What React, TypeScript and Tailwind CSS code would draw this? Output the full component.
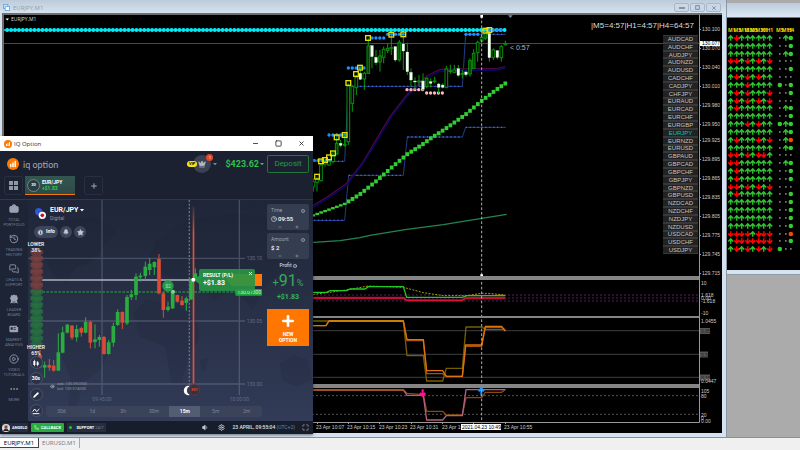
import {
  Bell,
  BriefcaseBusiness,
  CirclePlay,
  Clock3,
  Crown,
  Ellipsis,
  Eye,
  History,
  Info,
  Maximize,
  MessagesSquare,
  Minus,
  Pencil,
  Phone,
  Plus,
  Settings,
  Square,
  Star,
  Volume1,
  X,
} from 'lucide-react';

type Point = [number, number];

// pair, eight trend arrows, three status marks
const SIGNALS: [string, string, string][] = [
  ['AUDCAD', 'UDUUUUUU', '-UG'],
  ['AUDCHF', 'UUUUUUUU', '--G'],
  ['AUDJPY', 'UUUUUUUU', '-UG'],
  ['AUDNZD', 'DDUDUDUD', '---'],
  ['AUDUSD', 'UUUUUUUU', '--G'],
  ['CADCHF', 'UDUDUDUU', '---'],
  ['CADJPY', 'UUUDUUUU', 'G-G'],
  ['CHFJPY', 'UDUDUUUD', '--G'],
  ['EURAUD', 'UDUDUDUD', '---'],
  ['EURCAD', 'UDUUUUUU', '-UG'],
  ['EURCHF', 'UUUUUUUU', '--G'],
  ['EURGBP', 'UUUDUDUU', 'GUG'],
  ['EURJPY', 'UUUUUUUU', '-UG'],
  ['EURNZD', 'UDUUUDUD', '-UR'],
  ['EURUSD', 'UUUUUUUU', '-UG'],
  ['GBPAUD', 'DDUDUDDU', '---'],
  ['GBPCAD', 'DDUUUUUU', '-UG'],
  ['GBPCHF', 'UDUUUUUU', '--G'],
  ['GBPJPY', 'UDUUUUUU', '--G'],
  ['GBPNZD', 'DDUDUDUD', '---'],
  ['GBPUSD', 'UDUUUUUU', '--G'],
  ['NZDCAD', 'UUUUUUUU', '--G'],
  ['NZDCHF', 'UUUUUUUU', '--G'],
  ['NZDJPY', 'UUUUUUUU', '--G'],
  ['NZDUSD', 'UUUUUUUU', '--G'],
  ['USDCAD', 'DDDDUDDD', '--R'],
  ['USDCHF', 'UDDDDDDD', '--G'],
  ['USDJPY', 'UDUDUDUD', 'G--'],
];

// x, high, low, body top, body bottom, kind (h hollow, w white, d dark green)
const M1_CANDLES: [number, number, number, number, number, string][] = [
  [10, 535, 575, 545, 560, 'h'], [21, 530, 575, 538, 547, 'h'], [33, 490, 545, 495, 542, 'h'],
  [45, 480, 500, 486, 492, 'h'], [57, 480, 497, 485, 495, 'h'], [69, 455, 490, 465, 485, 'h'],
  [80, 412, 465, 430, 462, 'd'], [92, 420, 442, 430, 436, 'w'], [104, 405, 440, 433, 436, 'h'],
  [115, 250, 435, 258, 425, 'h'], [127, 255, 335, 260, 310, 'h'], [139, 225, 285, 232, 262, 'h'],
  [151, 200, 240, 220, 238, 'w'], [163, 215, 270, 220, 237, 'h'], [175, 115, 222, 138, 220, 'd'],
  [186, 135, 205, 137, 170, 'w'], [198, 150, 195, 172, 188, 'w'], [210, 150, 215, 168, 186, 'd'],
  [221, 140, 190, 148, 172, 'h'], [233, 130, 160, 145, 152, 'd'], [244, 105, 165, 143, 145, 'h'],
  [256, 140, 185, 140, 180, 'w'], [268, 120, 185, 127, 180, 'd'], [280, 105, 210, 132, 153, 'w'],
  [292, 128, 225, 156, 215, 'w'], [303, 205, 258, 217, 240, 'w'], [315, 232, 270, 243, 246, 'w'],
  [327, 225, 260, 243, 246, 'h'], [339, 220, 272, 243, 267, 'w'], [350, 232, 265, 235, 260, 'd'],
  [362, 235, 262, 245, 250, 'w'], [374, 230, 250, 243, 245, 'h'], [386, 248, 280, 252, 262, 'w'],
  [398, 250, 265, 255, 262, 'w'], [409, 198, 265, 207, 262, 'h'], [421, 194, 222, 212, 215, 'h'],
  [433, 195, 220, 210, 217, 'h'], [445, 195, 230, 206, 226, 'w'], [457, 210, 235, 220, 223, 'h'],
  [468, 212, 230, 216, 224, 'w'], [480, 175, 230, 182, 222, 'd'], [491, 148, 207, 160, 205, 'd'],
  [503, 122, 185, 127, 158, 'h'], [515, 95, 135, 112, 123, 'h'], [526, 95, 120, 100, 115, 'd'],
  [538, 95, 185, 100, 173, 'w'], [550, 145, 180, 150, 172, 'h'], [562, 150, 178, 152, 172, 'w'],
  [574, 135, 185, 140, 173, 'h'], [586, 122, 137, 130, 134, 'h'],
];

const YELLOW_BOXES: Point[] = [
  [21, 530], [33, 484], [45, 480], [57, 472], [69, 460], [80, 412], [104, 405], [115, 249],
  [138, 222], [150, 203], [174, 114], [244, 104], [280, 103], [526, 92], [538, 90],
];

// y, first x, last x
const BLUE_DOTS: [number, number, number][] = [
  [481, 1, 60], [405, 57, 104], [204, 115, 163], [114, 186, 222], [103, 233, 280], [103, 468, 505], [90, 538, 576],
];

const PRICES: [string, number][] = [
  ['130.100', 29], ['130.070', 48], ['130.040', 67], ['130.010', 86], ['129.980', 105],
  ['129.950', 124], ['129.925', 140], ['129.895', 159], ['129.865', 178], ['129.835', 197],
  ['129.805', 216], ['129.775', 235], ['129.745', 254], ['129.715', 273],
];

const INDICATOR_LABELS: [string, number][] = [
  ['10', 283], ['1.618', 295], ['0.00', 298], ['-1.618', 301], ['-10', 313], ['1.0455', 321],
  ['0.0447', 381], ['105', 391], ['80', 396], ['20', 415], ['0', 418], ['0.00', 421],
];

const TIMES: [string, number][] = [
  ['23 Apr 10:07', 316], ['23 Apr 10:15', 347], ['23 Apr 10:23', 379], ['23 Apr 10:31', 410],
  ['23 Apr 10:39', 442], ['23 Apr 10:55', 504],
];

const BAR = 11.75;

const TREND: Point[] = [
  [0, 650], [60, 628], [104, 612], [150, 583], [200, 543], [245, 503], [292, 463], [340, 432],
  [360, 417], [409, 385], [468, 343], [515, 303], [561, 268], [587, 250],
];

function steps(from: number, to: number, size = BAR) {
  return Array.from({ length: Math.floor((to - from) / size + 0.3) + 1 }, (_, i) => from + i * size);
}

function valueAt(points: Point[], x: number) {
  const next = Math.max(1, points.findIndex(([px]) => px >= x));
  const [x0, y0] = points[next - 1];
  const [x1, y1] = points[next];
  return y0 + ((x - x0) / (x1 - x0)) * (y1 - y0);
}

function TerminalChart() {
  return (
    <svg viewBox="4 15 718 418" className="block h-full w-full" fontFamily="'Open Sans', sans-serif" role="img" aria-label="EURJPY one minute chart">
      <rect x="4" y="15" width="718" height="418" fill="#000" />
      <path d="M4 43.5H699" stroke="#414b56" />
      <g transform="translate(310 0) scale(.33333)" fill="none">
        <path d="M0 661H104L116 526H280L292 411H457L467 382H586M0 484H104L115 259H457L467 103H586" stroke="#233e88" strokeWidth="3" />
        <path d="M0 661H104M116 526H280M292 411H457M467 382H586M60 484H104M115 259H457M467 103H586" stroke="#4169e1" strokeWidth="4" strokeDasharray="4 7.75" />
        <path d="M0 622L50 592L110 550L160 485L195 425L240 350L290 285L350 228L390 208L470 206L560 206L586 200" stroke="#4c083c" strokeWidth="4" />
        <path d="M0 628L50 598L110 556L160 489L200 425L245 350L292 288L350 236L390 213L470 212L560 210L586 205" stroke="#08086c" strokeWidth="4" />
        <path d="M0 728L90 722L150 713L180 706L290 688L400 674L515 655L590 643" stroke="#23854f" strokeWidth="4" />
        {steps(-908.5, 586).map((x) => (
          <circle key={x} cx={x} cy="90" r="5.8" fill="#00f6ff" />
        ))}
        <path d="M-918 90H586" stroke="#00e5f0" strokeWidth="4" />
        {BLUE_DOTS.map(([y, from, to]) => steps(from, to).map((x) => <circle key={`${x}-${y}`} cx={x} cy={y} r="5" fill="#1e90ff" />))}
        {[[269, 291, 340], [279, 350, 398]].map(([y, from, to]) =>
          steps(from, to).map((x) => <circle key={x} cx={x} cy={y} r="5" fill="#ffb6c1" />),
        )}
        {M1_CANDLES.map(([x, high, low, top, bottom, kind]) => (
          <g key={x}>
            <path d={`M${x} ${high}V${low}`} stroke="#0a9a0a" strokeWidth="3" />
            <rect
              x={x - 4}
              y={top}
              width="8"
              height={bottom - top}
              fill={kind === 'w' ? '#f4fff4' : kind === 'd' ? '#043c04' : '#000'}
              stroke={kind === 'w' ? '#c8f0c8' : '#0a8f0a'}
              strokeWidth={kind === 'w' ? 1 : 3}
            />
          </g>
        ))}
        {YELLOW_BOXES.map(([x, y]) => (
          <rect key={`${x}-${y}`} x={x - 7} y={y - 7} width="14" height="14" stroke="#e6e000" strokeWidth="4" />
        ))}
        {steps(10.5, 586).map((x) => (
          <rect key={x} x={x - 6} y={valueAt(TREND, x) - (x > 115 ? 6 : 3.5)} width="11" height={x > 115 ? 12 : 7} fill="#32cd32" />
        ))}

        <g stroke="#54205f" strokeWidth="3" strokeDasharray="6 6">
          <path d="M-918 885H1167M-918 894H1167M-918 903H1167" />
        </g>
        <path d="M0 894H280L290 901H457L467 894H586" stroke="#8e1235" strokeWidth="7" />
        <path d="M0 894H280L290 901H457L467 894H586" stroke="#f0103a" strokeWidth="3" />
        <path d="M0 884L60 877L120 868L175 858L280 862L340 878L400 887H470L515 880H535L586 885" stroke="#a8a000" strokeWidth="3" strokeDasharray="6 4" />
        <path d="M0 877H50L60 872H110L120 867H165L175 860H280L290 892H457L470 887H586" stroke="#22c922" strokeWidth="4" />

        <path d="M-918 992H1167M-918 1063H1167M-918 1132H1167" stroke="#333" strokeWidth="4" />
        <path d="M0 963H280L291 1067H340L350 1143H398L409 1105H457L468 981H515L526 988H586" stroke="#746000" strokeWidth="4" />
        <path d="M0 977H48L57 963H280L291 1022H340L350 1121H398L409 1129H457L467 1039H515L526 982H575L586 993" stroke="#a9500a" strokeWidth="4" />
        <path d="M0 977H48L57 963H280L291 1019H340L350 1112H398L409 1129H457L467 1035H515L526 979H575L586 993" stroke="#e0720f" strokeWidth="4" />
        <path d="M57 963H280" stroke="#c89400" strokeWidth="3" />

        <path d="M-918 1187H1167M-918 1243H1167" stroke="#555" strokeWidth="3" strokeDasharray="6 6" />
        <path d="M0 1170H280L291 1180L340 1184L350 1234H398L409 1245H457L468 1193H515L526 1177H575L586 1168" stroke="#8a4a0c" strokeWidth="4" />
        <path d="M280 1170L291 1186H340L350 1260H398L409 1247H457L468 1169H586" stroke="#b06082" strokeWidth="4" />
        <path d="M0 1170H280" stroke="#b05a2a" strokeWidth="4" />
        <path d="M338 1168V1186M330 1179L338 1188L346 1179" stroke="#ff1493" strokeWidth="6" />
        <path d="M514 1184V1166M506 1174L514 1164L522 1174" stroke="#1e90ff" strokeWidth="6" />
        <path d="M515 48V1270" stroke="#b0b0b0" strokeWidth="3" strokeDasharray="8 6" />
        <path d="M511 44H519V53H511ZM511 823H519V832H511Z" fill="#fff" />
        <path d="M594 46H608L601 54Z" fill="#6f8fb0" />
      </g>

      <g fill="#858585">
        <rect x="4" y="276" width="695" height="4" />
        <rect x="4" y="316" width="695" height="2" />
        <rect x="4" y="384" width="695" height="4" />
      </g>
      <path d="M699.5 15V422.5H4M317.5 422V424M348.5 422V424M379.5 422V424M411.5 422V424M442.5 422V424M473.5 422V424M505.5 422V424" stroke="#999" fill="none" />

      <path d="M5.5 18.5H9L7.3 20.5Z" fill="#fff" />
      <text x="11" y="21" fontSize="5" fill="#ddd">EURJPY,M1</text>
      <text x="694" y="28" fontSize="8" fill="#ddd" textAnchor="end" fontFamily="'Liberation Sans', sans-serif">|M5=4:57|H1=4:57|H4=64:57</text>
      <text x="510" y="50" fontSize="7" fill="#bbb" fontFamily="'Liberation Sans', sans-serif">&lt; 0:57</text>
      <g fontSize="5" fill="#ccc" fontFamily="'Liberation Sans', sans-serif">
        {PRICES.map(([label, y]) => (
          <g key={label}>
            <path d={`M699 ${y + 0.5}H701`} stroke="#999" />
            <text x="702" y={y + 2}>{label}</text>
          </g>
        ))}
        {[['0.85', 331], ['0.5', 354.5], ['0.15', 377.5]].map(([label, y]) => (
          <g key={label}>
            <rect x="700" y={Number(y) - 3} width={label === '0.5' ? 8 : 10} height="6" fill="#555" />
            <text x="701" y={Number(y) + 2} fill="#222">{label}</text>
          </g>
        ))}
        {INDICATOR_LABELS.map(([label, y]) => (
          <text key={y} x="701" y={y + 2}>{label}</text>
        ))}
        {TIMES.map(([label, x]) => (
          <text key={label} x={x} y="429">{label}</text>
        ))}
        <rect x="700" y="41" width="20" height="5" fill="#fff" />
        <text x="702" y="45" fill="#000">130.077</text>
        <rect x="461" y="424" width="40" height="6" fill="#fff" />
        <text x="462" y="429" fill="#000">2021.04.23 10:49</text>
      </g>
    </svg>
  );
}

function WindowButton({ label, children }: { label: string; children: React.ReactNode }) {
  return (
    <button aria-label={label} className="flex h-[9px] w-[15px] items-center justify-center rounded-[2px] border border-[#a9b8c8] bg-[#c9d7e6] text-[#8893a0]">
      {children}
    </button>
  );
}

function TerminalWindow() {
  return (
    <section className="flex min-w-0 flex-1 flex-col bg-[#d3e1f0] pr-1 pb-1 pl-0.5">
      <header className="-mr-1 -ml-0.5 flex h-[13px] items-center gap-px bg-linear-to-b from-[#bccbda] to-[#d6e3f0] pt-0.5 pr-[5px] pl-[3px]">
        <svg viewBox="0 0 16 16" className="mr-0.5 size-[7px]">
          <rect x="1" y="1" width="10" height="9" fill="#d6e8fa" stroke="#6aa5e0" strokeWidth="2" />
          <rect x="5" y="6" width="10" height="9" fill="#fff" stroke="#6aa5e0" strokeWidth="2" />
        </svg>
        <span className="flex-1 text-[6px] leading-none text-[#929ca7]">EURJPY,M1</span>
        <WindowButton label="Minimize"><span className="h-0.5 w-1.5 border border-[#8893a0]" /></WindowButton>
        <WindowButton label="Restore"><Square className="size-[5px]" strokeWidth={5} /></WindowButton>
        <WindowButton label="Close"><X className="size-1.5" strokeWidth={4} /></WindowButton>
      </header>
      <div className="relative min-h-0 flex-1 border-t-2 border-l-2 border-[#6e6e6e] bg-black">
        <TerminalChart />
        <div className="absolute top-5 right-6 grid h-[219px] w-[35px] auto-rows-fr">
          {SIGNALS.map(([pair]) => (
            <button
              key={pair}
              className={`flex items-center justify-center border-y border-[#383838] bg-[#222] font-['Liberation_Sans',sans-serif] text-[6px] leading-none ${pair === 'EURJPY' ? 'text-[#00c8c8]' : 'text-[#c4c4c4]'}`}
            >
              {pair}
            </button>
          ))}
        </div>
      </div>
    </section>
  );
}

function Mark({ kind }: { kind: string }) {
  return (
    <svg viewBox="0 0 6 8" className="h-full w-full overflow-visible">
      {kind === 'U' && <path d="M3 7V2M.3 4.6L3 1.7L5.7 4.6" fill="none" stroke="#2fc72f" strokeWidth="1.5" />}
      {kind === 'D' && <path d="M3 1V6M.3 3.4L3 6.3L5.7 3.4" fill="none" stroke="#f00" strokeWidth="1.7" />}
      {kind === 'G' && <circle cx="3" cy="4" r="2.4" fill="#32cd32" />}
      {kind === 'R' && <circle cx="3" cy="4" r="2.4" fill="#ff4500" />}
      {kind === '-' && <rect x="2.1" y="3.2" width="1.8" height="1.6" fill="#888" />}
    </svg>
  );
}

function SignalsWindow() {
  return (
    <section className="w-[74px] overflow-hidden border-l border-[#8a96a3] bg-[#ababab]">
      <div className="mt-[3px] h-[15px] border-b border-[#777] bg-linear-to-b from-[#bccbda] to-[#dce8f4]" />
      <div className="h-[252px] bg-black pt-[9px]">
        <div className="flex gap-1 pl-px text-[5px] leading-[7px] font-bold text-[#e0d800]">
          <div className="grid w-[44px] grid-cols-8">
            {['M1', 'M5', 'M15', 'M30', 'M5', 'M30', 'H1', 'H1'].map((label, i) => (
              <span key={i} className="w-0 whitespace-nowrap">{label}</span>
            ))}
          </div>
          <div className="grid w-[17px] grid-cols-3">
            {['M5', 'M15', 'H4'].map((label) => (
              <span key={label} className="w-0 whitespace-nowrap">{label}</span>
            ))}
          </div>
        </div>
        <div className="grid h-[219px] auto-rows-fr pl-px">
          {SIGNALS.map(([pair, trend, status]) => (
            <div key={pair} className="flex min-h-0 gap-[5px]">
              <div className="grid w-[44px] grid-cols-8">
                {trend.split('').map((kind, i) => <Mark key={i} kind={kind} />)}
              </div>
              <div className="grid w-[17px] grid-cols-3">
                {status.split('').map((kind, i) => <Mark key={i} kind={kind} />)}
              </div>
            </div>
          ))}
        </div>
      </div>
      <div className="h-[5px] border-b border-[#8f9aa6] bg-[#d6e3f1]" />
    </section>
  );
}

// x, high, low, body top, body bottom, rising
const OPTION_CANDLES: [number, number, number, number, number, boolean][] = [
  [120, 1050, 1104, 1065, 1102, false], [134, 1085, 1133, 1095, 1103, true], [148, 1077, 1112, 1095, 1103, false],
  [161, 1080, 1115, 1097, 1112, false], [175, 1000, 1112, 1057, 1112, true], [188, 980, 1060, 997, 1058, true],
  [202, 972, 1000, 974, 998, true], [216, 975, 1020, 977, 1013, false], [230, 975, 1025, 987, 1012, true],
  [244, 980, 1010, 984, 998, false], [257, 952, 1000, 966, 998, true], [271, 962, 1045, 966, 1028, false],
  [285, 973, 1045, 1018, 1026, true], [298, 1005, 1040, 1011, 1020, true], [312, 1008, 1064, 1011, 1062, false],
  [326, 1020, 1064, 1027, 1062, true], [340, 968, 1040, 978, 1028, true], [353, 928, 978, 936, 975, true],
  [367, 934, 987, 936, 968, false], [381, 885, 975, 891, 970, true], [394, 870, 900, 883, 892, true],
  [408, 820, 900, 830, 885, true], [421, 818, 845, 827, 832, true], [436, 785, 840, 800, 828, true],
  [449, 774, 825, 791, 810, true], [463, 784, 825, 786, 802, true], [477, 762, 883, 777, 880, false],
  [490, 876, 953, 880, 930, false], [504, 905, 935, 920, 930, true], [518, 870, 927, 875, 925, true],
  [532, 884, 908, 885, 905, false], [546, 888, 917, 902, 915, false], [559, 890, 932, 895, 909, true],
  [573, 835, 900, 838, 898, true], [586, 805, 840, 820, 838, true],
];

function OptionChart() {
  return (
    <svg viewBox="84 600 855 663" className="absolute inset-0 h-full w-full" fontFamily="Roboto, sans-serif" role="img" aria-label="EUR/JPY candlestick chart">
      <defs>
        <pattern id="land" width="6" height="6" patternUnits="userSpaceOnUse">
          <circle cx="3" cy="3" r="2.4" fill="#161c2c" />
        </pattern>
        <linearGradient id="deadline" x1="0" y1="0" x2="0" y2="1">
          <stop offset="0" stopColor="#e2523a" stopOpacity=".2" />
          <stop offset=".15" stopColor="#e2523a" />
        </linearGradient>
      </defs>
      <g fill="url(#land)" opacity=".35">
        <path d="M120 700L190 660L290 650L350 690L310 740L270 790L230 800L200 850L160 830L130 770Z" />
        <path d="M180 990L240 965L300 1000L330 1050L300 1110L250 1150L225 1240L205 1230L210 1130L180 1060Z" />
        <path d="M400 940L440 900L530 910L590 960L600 1010L570 1060L545 1150L515 1150L495 1040L420 1010Z" />
        <path d="M600 1080L625 1072L618 1110L604 1115Z" />
        <path d="M440 790L470 720L560 660L700 640L860 660L920 720L870 800L800 850L760 930L700 870L640 900L590 840L500 830Z" />
        <path d="M840 1090L880 1065L925 1080L935 1140L890 1160L845 1140Z" />
      </g>
      <g stroke="#8b94aa" strokeOpacity=".35" strokeWidth="4">
        <path d="M306 600V1185M718 600V1185M84 775H735M84 963H735M84 1152H735" />
      </g>
      <path d="M126 840H575" stroke="#aeb3c0" strokeWidth="4" />
      <path d="M115 876H710" stroke="#27a844" strokeWidth="3" strokeDasharray="8 4" />
      <path d="M568 600V1160" stroke="#6a7286" strokeWidth="4" strokeDasharray="6 5" />
      <path d="M578 620H583V1150H578Z" fill="url(#deadline)" />
      {/* sentiment scale */}
      {steps(750, 1015, 20).map((y) => (
        <path key={y} d={`M92 ${y}H128L130 ${y + 8}L122 ${y + 16}L130 ${y + 20}L110 ${y + 36}L90 ${y + 20}L98 ${y + 16}L90 ${y + 8}Z`} fill={y < 862 ? '#7c403f' : '#27733f'} opacity=".75" />
      ))}
      {OPTION_CANDLES.map(([x, high, low, top, bottom, rising]) => (
        <g key={x} fill={rising ? '#2bac40' : '#db4a34'}>
          <rect x={x - 1.5} y={high} width="3" height={low - high} />
          <rect x={x - 5.5} y={top} width="11" height={bottom - top} />
        </g>
      ))}
      <circle cx="504" cy="858" r="17" fill="#239a45" />
      <circle cx="519" cy="875" r="6" fill="#8cc79b" />
      <text x="504" y="864" fontSize="15" textAnchor="middle" fill="#b8e5c4">$2</text>
      <g fontSize="15" fill="#626b82">
        <text x="740" y="780">130.10</text>
        <text x="740" y="968">130.05</text>
        <text x="740" y="1157">130.00</text>
        <text x="306" y="1202" textAnchor="middle">09:45:00</text>
        <text x="718" y="1202" textAnchor="middle">10:00:00</text>
      </g>
      <g fontSize="12" fill="#8d94a6">
        <text x="172" y="1155">ask: 130.092000</text>
        <text x="172" y="1171">bid: 130.074000</text>
      </g>
      <circle cx="583" cy="1169" r="16" fill="#373040" stroke="#6e3e42" strokeWidth="2" />
      <text x="583" y="1173" fontSize="12" fontWeight="700" fill="#e24a35" textAnchor="middle">301</text>
      <path d="M569 1158A14 14 0 1 0 569 1185A15 15 0 0 1 569 1158Z" fill="#fff" />
      <path d="M680 840L696 822H786V858H696Z" fill="#ff7a0a" />
      <rect x="706" y="867" width="80" height="20" rx="3" fill="#1ea63c" />
      <text x="712" y="883" fontSize="15" fill="#c9f2d2">130.07300</text>
      <path d="M580 839L604 822V856Z" fill="#279645" />
      <circle cx="580" cy="839" r="6" fill="#fff" />
    </svg>
  );
}

function Logo({ className }: { className: string }) {
  return (
    <svg viewBox="0 0 24 24" className={className}>
      <circle cx="12" cy="12" r="12" fill="#ff7a00" />
      <path d="M7.5 17V13M12 17V10M16.5 17V7" stroke="#fff" strokeWidth="3" strokeLinecap="round" />
    </svg>
  );
}

function LeaderIcon({ className }: { className: string }) {
  return (
    <svg viewBox="0 0 24 24" className={className} fill="currentColor">
      <path d="M12 1L15 3L19 3L20 7L22 10L20 13L19 17L15 17L12 19L9 17L5 17L4 13L2 10L4 7L5 3L9 3Z" />
      <path d="M5 16L3 23L8 21L11 23V18ZM19 16L21 23L16 21L13 23V18Z" />
    </svg>
  );
}

function NewsIcon({ className }: { className: string }) {
  return (
    <svg viewBox="0 0 24 24" className={className} fill="currentColor">
      <path d="M3 4H19V7H22V18Q22 20 20 20H4Q1 20 1 17V6Q1 4 3 4Z" />
      <path d="M4 8H9V14H4ZM11 8H16V10H11ZM11 12H16V14H11Z" fill="#1d2436" />
    </svg>
  );
}

const RAIL = [
  { icon: BriefcaseBusiness, lines: ['TOTAL', 'PORTFOLIO'], solid: true },
  { icon: History, lines: ['TRADING', 'HISTORY'] },
  { icon: MessagesSquare, lines: ['CHATS &', 'SUPPORT'] },
  { icon: LeaderIcon, lines: ['LEADER', 'BOARD'], solid: true },
  { icon: NewsIcon, lines: ['MARKET', 'ANALYSIS'], solid: true },
  { icon: CirclePlay, lines: ['VIDEO', 'TUTORIALS'] },
  { icon: Ellipsis, lines: ['MORE'] },
];

function Rail() {
  return (
    <nav className="w-7 shrink-0 bg-[#1d2436] pt-1">
      {RAIL.map(({ icon: Icon, lines, solid }) => (
        <button key={lines[0]} className="flex h-[30px] w-full flex-col items-center text-[#9ba2b1]">
          <Icon className="mb-[3px] size-[10px] shrink-0" fill={solid ? 'currentColor' : 'none'} />
          {lines.map((line) => (
            <span key={line} className="text-[4px] leading-[5px] text-[#747c8f]">{line}</span>
          ))}
        </button>
      ))}
    </nav>
  );
}

function Stepper({ label, children }: { label: string; children: React.ReactNode }) {
  return (
    <div className="flex h-[26px] flex-col justify-between rounded-[2px] bg-[#353d51] px-1 pt-1 pb-px">
      <div className="flex items-center justify-between text-[5px] leading-none text-[#9aa1b0]">
        {label}
        <Info className="size-1" strokeWidth={4} />
      </div>
      <div className="flex items-center gap-px text-[6px] leading-none font-medium text-white">{children}</div>
      <div className="flex justify-around text-[#a6adba]">
        <button aria-label={`Decrease ${label}`}><Minus className="size-1" strokeWidth={3} /></button>
        <button aria-label={`Increase ${label}`}><Plus className="size-1" strokeWidth={3} /></button>
      </div>
    </div>
  );
}

function TradePanel() {
  return (
    <aside className="relative flex w-[47px] shrink-0 flex-col pt-1 pr-1 pl-px text-center">
      <div className="flex flex-col gap-[3px]">
        <Stepper label="Time">
          <Clock3 className="size-[6px]" />
          09:55
        </Stepper>
        <Stepper label="Amount">$ 2</Stepper>
      </div>
      <div className="mt-1 flex items-center justify-center gap-px text-[5px] leading-none text-[#e3e6ec]">
        Profit <Info className="size-1" strokeWidth={3} />
      </div>
      <div className="mt-1 text-[16px] leading-[18px] text-[#38a858]">
        <span className="text-[11px]">+</span>91<span className="text-[9px]">%</span>
      </div>
      <div className="text-[7px] leading-[10px] font-bold text-[#35b556]">+$1.83</div>
      <button className="mt-[7px] flex h-[37px] flex-col items-center justify-center bg-[#ff7700] text-[5px] leading-[6px] font-bold text-white">
        <Plus className="mb-0.5 size-[16px]" strokeWidth={4} />
        <span>NEW</span>
        <span>OPTION</span>
      </button>
    </aside>
  );
}

const TOOL = 'flex size-[13px] items-center justify-center rounded-full border border-[#495268] bg-[#2a3247] text-[5px] leading-none font-bold text-white';

function ChartOverlay() {
  return (
    <div className="relative flex min-w-0 flex-1 flex-col">
      <div className="flex items-center gap-2 pt-1.5 pl-[7px]">
        <svg viewBox="0 0 24 24" className="size-[11px]">
          <circle cx="8" cy="8" r="8" fill="#2b56d6" />
          <circle cx="8" cy="8" r="4" fill="none" stroke="#5f83e8" strokeDasharray="1 2" />
          <circle cx="16" cy="16" r="8" fill="#fff" />
          <circle cx="16" cy="16" r="4" fill="#c8102e" />
        </svg>
        <div className="-ml-1">
          <button className="flex items-center gap-0.5 text-[7px] leading-[9px] font-bold text-white">
            EUR/JPY
            <svg viewBox="0 0 8 5" className="w-1"><path d="M0 0H8L4 5Z" fill="#fff" /></svg>
          </button>
          <div className="text-[5px] leading-[6px] text-[#8e96a8]">Digital</div>
        </div>
      </div>
      <div className="flex gap-0.5 pt-[5px] pl-1.5 text-[#c4cad5]">
        <button className="flex h-3 w-6 items-center justify-center gap-0.5 rounded-full bg-[#3c455b] text-[5px] font-bold text-white">
          <Info className="size-[7px]" strokeWidth={3} fill="#c4cad5" stroke="#3c455b" />
          Info
        </button>
        <button aria-label="Alerts" className="flex size-3 items-center justify-center rounded-full bg-[#3c455b]"><Bell className="size-1.5" fill="currentColor" /></button>
        <button aria-label="Favourite" className="flex size-3 items-center justify-center rounded-full bg-[#3c455b]"><Star className="size-[7px]" fill="currentColor" /></button>
      </div>
      <div className="flex h-[118px] w-4 flex-col items-center justify-between pt-[3px] text-[5px] leading-[6px] font-medium text-white">
        <div className="text-center">LOWER<br />38%</div>
        <div className="text-center">HIGHER<br />65%</div>
      </div>
      <div className="flex w-4 flex-col items-center gap-[3px]">
        <button aria-label="Chart type" className={TOOL}>
          <svg viewBox="0 0 12 12" className="size-2" fill="#fff"><path d="M2 3H5V9H2ZM3 1H4V11H3ZM7 5H10V9H7ZM8 3H9V11H8Z" /></svg>
        </button>
        <button className={TOOL}>30s</button>
        <button aria-label="Draw" className={TOOL}><Pencil className="size-1.5" fill="#fff" /></button>
        <button aria-label="Indicators" className={TOOL}>
          <svg viewBox="0 0 12 12" className="size-2" fill="none" stroke="#fff" strokeWidth="1.5"><path d="M1 7L4 3L7 7L11 3M1 10H11" /></svg>
        </button>
      </div>
      <div className="absolute right-1 bottom-1 left-[18px] grid h-[11px] grid-cols-7 overflow-hidden rounded-[2px] bg-[#3a435a] text-[5px] text-[#7c859a]">
        {['30d', '1d', '3h', '30m', '15m', '5m', '2m'].map((frame) => (
          <button key={frame} className={frame === '15m' ? 'bg-[#535c72] font-bold text-white' : ''}>{frame}</button>
        ))}
      </div>
      <Eye className="absolute bottom-8 left-[22px] size-[5px] text-[#aab0be]" strokeWidth={3} />
      <div className="absolute top-[69px] left-[171px] flex h-[22px] w-14 flex-col justify-center gap-0.5 rounded-[2px] bg-[#279645]/90 pl-1 text-[5px] leading-none font-bold text-white">
        <span>RESULT (P/L)</span>
        <span className="text-[7px]">+$1.83</span>
        <button aria-label="Close result" className="absolute top-0.5 right-0.5"><X className="size-[5px]" strokeWidth={4} /></button>
      </div>
    </div>
  );
}

function OptionHeader() {
  return (
    <header className="h-[49px] border-b border-[#30384a] bg-[#1b2130]">
      <div className="flex items-center pt-1 pr-1 pl-[7px]">
        <Logo className="mr-1 size-3" />
        <span className="flex-1 font-[Lato,sans-serif] text-[9px] leading-none text-[#a4a9b5]">iq option</span>
        <span className="z-10 -mr-1 rounded-full bg-[#f5e51b] px-0.5 text-[4px] leading-[6px] font-bold text-black">VIP</span>
        <button aria-label="Profile" className="relative mr-0.5 flex size-[18px] items-center justify-center rounded-full bg-[#3a4153]">
          <Crown className="size-2 text-[#b3b8c4]" fill="currentColor" />
          <span className="absolute -top-px -right-0.5 flex size-[7px] items-center justify-center rounded-full bg-[#e2472f] text-[4px] leading-none text-white">1</span>
        </button>
        <svg viewBox="0 0 8 5" className="w-1"><path d="M0 0H8L4 5Z" fill="#7c8496" /></svg>
        <button className="ml-2 flex items-center gap-px text-[9px] leading-none font-bold text-[#2fbf52]">
          $423.62
          <svg viewBox="0 0 8 5" className="w-1"><path d="M0 0H8L4 5Z" fill="#2fbf52" /></svg>
        </button>
        <button className="ml-[3px] h-[18px] w-[42px] rounded-[2px] border border-[#23753c] text-[8px] leading-none text-[#2a9a49]">Deposit</button>
      </div>
      <div className="flex gap-0.5 pt-[3px] pl-1">
        <button aria-label="Layout" className="flex size-[19px] items-center justify-center rounded-[2px] border border-[#282f40]">
          <svg viewBox="0 0 18 18" className="size-[9px]" fill="#8f96a4"><path d="M0 0H8V8H0ZM10 0H18V8H10ZM0 10H8V18H0ZM10 10H18V18H10Z" /></svg>
        </button>
        <button className="flex h-[19px] w-[50px] items-center gap-0.5 border-b border-[#f07a12] bg-linear-to-b from-[#33564f] to-[#2c4a49] pl-0.5 text-left text-[5px] leading-[6px] font-bold text-white">
          <span className="flex size-[13px] items-center justify-center rounded-full border border-[#6f8686] bg-[#2a3d44] text-[4px]">30</span>
          <span>EUR/JPY<br /><span className="text-[#34c759]">+$1.83</span></span>
        </button>
        <button aria-label="Add asset" className="ml-[7px] flex size-[19px] items-center justify-center rounded-[2px] border border-[#282f40]">
          <Plus className="size-2 text-[#a0a6b3]" strokeWidth={3} />
        </button>
      </div>
    </header>
  );
}

function StatusBar() {
  return (
    <footer className="flex h-[13px] items-center gap-[3px] bg-[#171d2a] px-0.5 text-[4px] leading-none font-bold text-white">
      <button className="flex h-[9px] w-[26px] items-center gap-0.5 bg-[#262d3d]">
        <svg viewBox="0 0 16 16" className="size-2">
          <circle cx="8" cy="8" r="8" fill="#ddd" />
          <path d="M5 3H11V8L8 10L5 8Z" fill="#8a4a35" />
          <path d="M2 14L6 9L8 11L10 9L14 14Z" fill="#1b1b22" />
        </svg>
        ANGELO
      </button>
      <button className="flex h-[9px] w-[33px] items-center justify-center gap-0.5 rounded-[1px] bg-[#26ad3e]">
        <Phone className="size-[5px]" fill="none" /> CALLBACK
      </button>
      <button className="flex h-[9px] w-[39px] items-center justify-center gap-1 bg-[#262d3d]">
        <span className="size-[3px] rounded-full bg-[#2bbf45]" />
        <span>SUPPORT <span className="font-normal text-[#7c8496]">24/7</span></span>
      </button>
      <span className="flex-1" />
      <button aria-label="Sound"><Volume1 className="size-[7px] text-[#c6cad3]" fill="currentColor" /></button>
      <button aria-label="Settings" className="ml-1.5"><Settings className="size-[7px] text-[#c6cad3]" strokeWidth={3} /></button>
      <span className="ml-1 text-[5px] font-medium text-[#dfe2e8]">
        23 APRIL, 09:55:04 <span className="font-normal text-[#7c8496]">(UTC+2)</span>
      </span>
      <button aria-label="Full screen" className="mr-0.5 ml-1"><Maximize className="size-[7px] text-[#c6cad3]" /></button>
    </footer>
  );
}

function OptionWindow() {
  return (
    <section className="absolute top-[136px] left-0 w-[313px] font-[Roboto,sans-serif] shadow-[0_1px_3px_#0008]">
      <div className="flex h-[15px] items-center bg-white pr-2 pl-1">
        <Logo className="mr-0.5 size-2" />
        <span className="flex-1 font-['Open_Sans',sans-serif] text-[6px] leading-none text-[#333]">IQ Option</span>
        <div className="flex gap-4 text-[#333]">
          <button aria-label="Minimize"><Minus className="size-[7px]" strokeWidth={3} /></button>
          <button aria-label="Maximize"><Square className="size-[7px]" strokeWidth={3} /></button>
          <button aria-label="Close"><X className="size-[7px]" strokeWidth={3} /></button>
        </div>
      </div>
      <OptionHeader />
      <div className="flex h-[221px]">
        <Rail />
        <div className="relative flex min-w-0 flex-1 bg-linear-to-b from-[#1f2638] to-[#323b57]">
          <OptionChart />
          <ChartOverlay />
          <TradePanel />
        </div>
      </div>
      <StatusBar />
    </section>
  );
}

export default function App() {
  return (
    <div className="flex h-screen flex-col overflow-hidden bg-[#f0f0f0] font-['Open_Sans',sans-serif]">
      <main className="relative flex min-h-0 flex-1">
        <TerminalWindow />
        <SignalsWindow />
        <OptionWindow />
      </main>
      <nav className="flex h-[13px] items-start border-t border-[#8f8f8f] text-[6px] leading-none">
        <button className="h-[10px] w-[39px] border-r border-b border-[#444] bg-white text-black">EURJPY,M1</button>
        <button className="h-[10px] w-[41px] border-r border-[#aaa] text-[#777]">EURUSD,M1</button>
      </nav>
    </div>
  );
}
